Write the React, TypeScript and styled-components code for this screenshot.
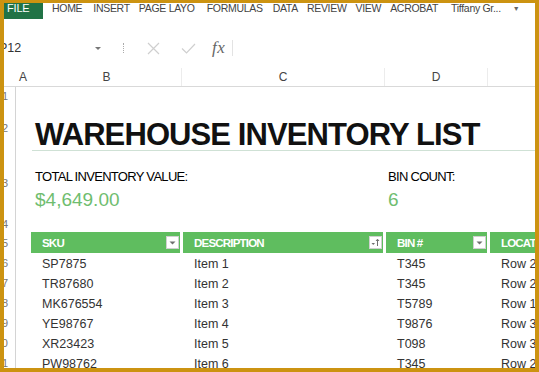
import React from 'react';
import styled, { createGlobalStyle } from 'styled-components';

const Global = createGlobalStyle`
  html, body { margin: 0; padding: 0; background: #fff; }
  body { font-family: "Liberation Sans", Arial, sans-serif; }
`;

// outer frame with the gold border
const Frame = styled.div`
  width: 539px;
  height: 372px;
  box-sizing: border-box;
  border-style: solid;
  border-color: #cc9311;
  border-width: 3px 4px 4px 4px;
  background: #fff;
  overflow: hidden;
  display: flex;
  flex-direction: column;
`;

const MenuBar = styled.div`
  height: 16px;
  display: flex;
  align-items: flex-start;
  flex-shrink: 0;
`;
const FileTab = styled.div`
  width: 39px;
  height: 16px;
  flex-shrink: 0;
  background: #217346;
  color: #fff;
  font-size: 11px;
  line-height: 11px;
  padding-left: 3px;
  box-sizing: border-box;
  letter-spacing: -0.2px;
`;
const MenuItem = styled.div<{ $gap: number }>`
  margin-left: ${p => p.$gap}px;
  flex-shrink: 0;
  font-size: 10.5px;
  line-height: 11px;
  color: #444;
  letter-spacing: -0.3px;
  white-space: nowrap;
`;
const UserArrow = styled.span`
  margin-left: 12px;
  flex-shrink: 0;
  font-size: 7px;
  line-height: 11px;
  color: #666;
`;

const FormulaBar = styled.div`
  margin-top: 19px;
  height: 20px;
  display: flex;
  align-items: center;
  flex-shrink: 0;
`;
const NameBox = styled.div`
  margin-left: -5px;
  width: 96px;
  font-size: 12.5px;
  color: #333;
`;
const NameArrow = styled.div`
  width: 0;
  height: 0;
  border-left: 3px solid transparent;
  border-right: 3px solid transparent;
  border-top: 3px solid #777;
`;
const DotSep = styled.div`
  margin-left: 22px;
  height: 10px;
  border-left: 1px dotted #aaa;
`;
const BarIcon = styled.div<{ $ml: number }>`
  margin-left: ${p => p.$ml}px;
  display: flex;
  align-items: center;
`;
const Fx = styled.div`
  margin-left: 16px;
  font-family: "Liberation Serif", "DejaVu Serif", serif;
  font-style: italic;
  font-size: 17px;
  color: #666;
  letter-spacing: 0.5px;
`;
const BarLine = styled.div`
  margin-left: 7px;
  height: 16px;
  border-left: 1px solid #e3e3e3;
`;

const ColHeaders = styled.div`
  margin-top: 10px;
  height: 18px;
  display: grid;
  grid-template-columns: 11px 17px 150px 203px 103px 1fr;
  border-bottom: 1px solid #d9d9d9;
  flex-shrink: 0;
`;
const ColLetter = styled.div<{ $tick?: boolean }>`
  font-size: 12px;
  color: #444;
  display: flex;
  align-items: center;
  justify-content: center;
  border-right: 1px solid ${p => (p.$tick ? '#ececec' : 'transparent')};
`;

const Sheet = styled.div`
  flex: 1;
  display: flex;
  min-height: 0;
`;
const Gutter = styled.div`
  width: 11px;
  border-right: 1px solid #d4d4d4;
  flex-shrink: 0;
`;
const RowNum = styled.div<{ $h: number }>`
  height: ${p => p.$h}px;
  display: flex;
  align-items: center;
  justify-content: flex-end;
  padding-right: 7px;
  font-size: 11px;
  color: #777;
  white-space: nowrap;
`;

const Content = styled.div`
  flex: 1;
  min-width: 0;
`;
const Title = styled.h1`
  margin: 32px 0 0 16px;
  padding: 0 0 0 3px;
  height: 31px;
  font-size: 31px;
  line-height: 31px;
  font-weight: bold;
  letter-spacing: -0.9px;
  color: #111;
  border-bottom: 1px solid #cfe1d5;
  white-space: nowrap;
`;
const Stats = styled.div`
  display: flex;
  margin: 18px 0 0 19px;
`;
const Stat = styled.div<{ $w?: number }>`
  width: ${p => (p.$w ? `${p.$w}px` : 'auto')};
`;
const StatLabel = styled.div`
  font-size: 13px;
  line-height: 15px;
  color: #000;
  letter-spacing: -0.7px;
`;
const StatValue = styled.div`
  margin-top: 5px;
  font-size: 19px;
  line-height: 22px;
  color: #6fbd6f;
`;

const Table = styled.div`
  margin: 21px 0 0 15px;
  display: grid;
  grid-template-columns: 149px 200px 101px 1fr;
  column-gap: 3px;
`;
const HeadCell = styled.div`
  height: 21px;
  background: #5fbd5f;
  color: #fff;
  font-size: 11.5px;
  font-weight: bold;
  letter-spacing: -0.8px;
  display: flex;
  align-items: center;
  justify-content: space-between;
  padding: 0 1px 0 11px;
  white-space: nowrap;
  overflow: hidden;
`;
const FilterBtn = styled.div`
  width: 13px;
  height: 13px;
  background: #fff;
  border: 1px solid #d0d0d0;
  box-sizing: border-box;
  display: flex;
  align-items: center;
  justify-content: center;
  flex-shrink: 0;
`;
const Cell = styled.div`
  height: 20px;
  display: flex;
  align-items: center;
  padding: 2px 0 0 11px;
  box-sizing: border-box;
  font-size: 12.5px;
  color: #333;
  white-space: nowrap;
`;

const rows = [
  ['SP7875', 'Item 1', 'T345', 'Row 2, Shelf 5'],
  ['TR87680', 'Item 2', 'T345', 'Row 2, Shelf 5'],
  ['MK676554', 'Item 3', 'T5789', 'Row 1, Shelf 2'],
  ['YE98767', 'Item 4', 'T9876', 'Row 3, Shelf 4'],
  ['XR23423', 'Item 5', 'T098', 'Row 3, Shelf 1'],
  ['PW98762', 'Item 6', 'T345', 'Row 2, Shelf 5'],
];

const rowHeights = [18, 46, 64, 17, 21, 20, 20, 20, 20, 20, 20, 20];

const menu: [string, number][] = [
  ['HOME', 9], ['INSERT', 11], ['PAGE LAYO', 9], ['FORMULAS', 12], ['DATA', 10],
  ['REVIEW', 9], ['VIEW', 9], ['ACROBAT', 9], ['Tiffany Gr...', 13],
];

const Drop = () => (
  <svg width="7" height="4" viewBox="0 0 7 4"><path d="M0.5 0.5 L6.5 0.5 L3.5 3.5 Z" fill="#707070" /></svg>
);
const SortDrop = () => (
  <svg width="9" height="9" viewBox="0 0 9 9">
    <path d="M0.5 5 L4 5 L2.25 7 Z" fill="#707070" />
    <path d="M6.5 8 L6.5 1.5 M5 3 L6.5 1.2 L8 3" stroke="#707070" strokeWidth="1" fill="none" />
  </svg>
);

export default function App() {
  return (
    <>
      <Global />
      <Frame>
        <MenuBar>
          <FileTab>FILE</FileTab>
          {menu.map(([m, g]) => (
            <MenuItem key={m} $gap={g}>{m}</MenuItem>
          ))}
          <UserArrow>▼</UserArrow>
        </MenuBar>

        <FormulaBar>
          <NameBox>P12</NameBox>
          <NameArrow />
          <DotSep />
          <BarIcon $ml={23}>
            <svg width="13" height="13" viewBox="0 0 13 13">
              <path d="M1 1 L12 12 M12 1 L1 12" stroke="#cfcfcf" strokeWidth="1.2" />
            </svg>
          </BarIcon>
          <BarIcon $ml={21}>
            <svg width="15" height="11" viewBox="0 0 15 11">
              <path d="M1 5.5 L5.5 10 L14 1" stroke="#cfcfcf" strokeWidth="1.2" fill="none" />
            </svg>
          </BarIcon>
          <Fx>fx</Fx>
          <BarLine />
        </FormulaBar>

        <ColHeaders>
          <ColLetter />
          <ColLetter>A</ColLetter>
          <ColLetter $tick>B</ColLetter>
          <ColLetter $tick>C</ColLetter>
          <ColLetter $tick>D</ColLetter>
          <ColLetter />
        </ColHeaders>

        <Sheet>
          <Gutter>
            {rowHeights.map((h, i) => (
              <RowNum key={i} $h={h}>{i + 1}</RowNum>
            ))}
          </Gutter>
          <Content>
            <Title>WAREHOUSE INVENTORY LIST</Title>
            <Stats>
              <Stat $w={353}>
                <StatLabel>TOTAL INVENTORY VALUE:</StatLabel>
                <StatValue>$4,649.00</StatValue>
              </Stat>
              <Stat>
                <StatLabel>BIN COUNT:</StatLabel>
                <StatValue>6</StatValue>
              </Stat>
            </Stats>
            <Table>
              <HeadCell>SKU<FilterBtn><Drop /></FilterBtn></HeadCell>
              <HeadCell>DESCRIPTION<FilterBtn><SortDrop /></FilterBtn></HeadCell>
              <HeadCell>BIN #<FilterBtn><Drop /></FilterBtn></HeadCell>
              <HeadCell>LOCATION</HeadCell>
              {rows.map(r => r.map((c, j) => <Cell key={r[0] + j}>{c}</Cell>))}
            </Table>
          </Content>
        </Sheet>
      </Frame>
    </>
  );
}
